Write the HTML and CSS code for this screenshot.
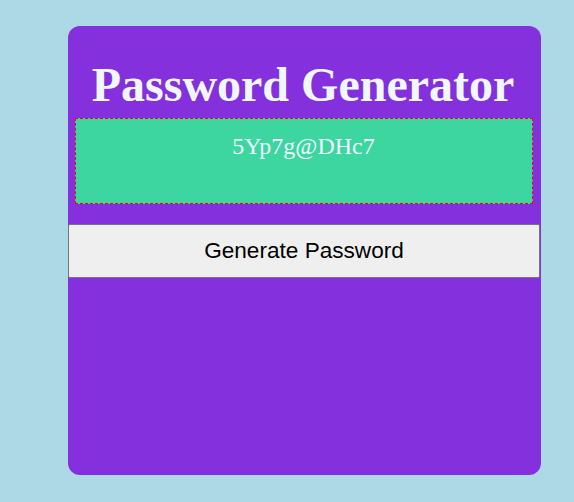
FILE: index.html
```html
<!DOCTYPE html>
<html>
<head>
<meta charset="utf-8">
<link rel="stylesheet" href="styles.css">
</head>
<body>
<div class="card">
  <h1 class="title">Password Generator</h1>
  <div class="output">5Yp7g@DHc7</div>
  <button class="generate">Generate Password</button>
</div>
</body>
</html>
```
FILE: styles.css
```css
html, body {
  margin: 0;
  padding: 0;
}
body {
  background: #add8e6;
  padding: 26px 0 0 68px;
  height: 502px;
  box-sizing: border-box;
}
.card {
  width: 473px;
  height: 449px;
  box-sizing: border-box;
  background: #8530dd;
  border-radius: 12px;
  padding-top: 31px;
  display: flex;
  flex-direction: column;
  align-items: center;
}
.title {
  margin: 0 3px 0 0;
  font-family: "Liberation Serif", serif;
  font-weight: bold;
  font-size: 48px;
  line-height: 55px;
  color: #f0f8ff;
  text-align: center;
}
.output {
  margin: 6px 1px 0 0;
  width: 458px;
  height: 86px;
  box-sizing: border-box;
  border: 1px dashed red;
  background: #3dd5a0;
  color: #f0f8ff;
  font-family: "Liberation Serif", serif;
  font-size: 24px;
  line-height: 28px;
  padding-top: 13px;
  padding-right: 1px;
  text-align: center;
}
.generate {
  margin-top: 20px;
  align-self: flex-start;
  width: 472px;
  height: 54px;
  box-sizing: border-box;
  background: #efefef;
  border: 1px solid #767676;
  border-radius: 2px;
  font-family: "Liberation Sans", Arial, sans-serif;
  font-size: 22.6px;
  color: #000;
}
```
